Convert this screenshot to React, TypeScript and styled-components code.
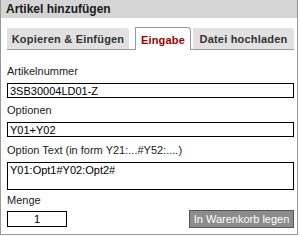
import React, { useEffect, useRef } from "react"
import styled, { createGlobalStyle } from "styled-components"

const GlobalStyle = createGlobalStyle`
	body {
		margin: 0;
		background: #fff;
		font-family: "Liberation Sans", Arial, sans-serif;
	}
	* {
		box-sizing: border-box;
	}
`

const Panel = styled.div`
	width: 298px;
	height: 235px;
	border: 1px solid #999;
	border-top: 0;
	display: flex;
	flex-direction: column;
`

const Header = styled.div`
	height: 18px;
	line-height: 19px;
	padding-left: 5px;
	background: #d5d5d5;
	color: #1a1a1a;
	font-size: 12px;
	font-weight: bold;
`

const TabBar = styled.div`
	display: flex;
	align-items: flex-end;
	height: 23px;
	margin: 9px 3px 0 6px;
	border-bottom: 1px solid #999;
`

const Tab = styled.div<{ $active?: boolean; $w: number; $ml?: number }>`
	width: ${(p) => p.$w}px;
	margin-left: ${(p) => p.$ml ?? 0}px;
	height: ${(p) => (p.$active ? 23 : 21)}px;
	margin-bottom: ${(p) => (p.$active ? -1 : 0)}px;
	display: flex;
	align-items: center;
	justify-content: center;
	font-size: 11px;
	font-weight: bold;
	letter-spacing: 0.2px;
	color: ${(p) => (p.$active ? "#990000" : "#333")};
	background: ${(p) => (p.$active ? "#fff" : "#e1e1e1")};
	border: ${(p) => (p.$active ? "1px solid #999" : "0")};
	border-bottom: 0;
	border-radius: ${(p) => (p.$active ? "0 4px 0 0" : "0 3px 0 0")};
	padding-top: ${(p) => (p.$active ? 1 : 0)}px;
	cursor: pointer;
`

const Content = styled.div`
	padding: 9px 3px 0 6px;
`

const Field = styled.div<{ $top?: number }>`
	margin-top: ${(p) => p.$top ?? 5}px;
`

const Label = styled.div<{ $mb?: number }>`
	height: 14px;
	line-height: 14px;
	margin-bottom: ${(p) => p.$mb ?? 5}px;
	font-size: 11px;
	color: #222;
`

const TextInput = styled.input<{ $w?: number; $center?: boolean }>`
	display: block;
	width: ${(p) => (p.$w ? `${p.$w}px` : "100%")};
	height: ${(p) => (p.$w ? 16 : 15)}px;
	margin: 0;
	padding: 0 2px;
	border: 1px solid #000;
	border-radius: 0;
	font-family: "Liberation Sans", Arial, sans-serif;
	font-size: 11px;
	color: #000;
	text-align: ${(p) => (p.$center ? "center" : "left")};
	outline: none;
`

const TextArea = styled.textarea`
	display: block;
	width: 100%;
	height: 28px;
	margin: 0;
	padding: 1px 2px 0;
	border: 1px solid #000;
	border-radius: 0;
	resize: none;
	overflow: hidden;
	font-family: "Liberation Sans", Arial, sans-serif;
	font-size: 11px;
	line-height: 13px;
	color: #000;
	caret-color: #000;
	outline: none;
`

const BottomRow = styled.div`
	display: flex;
	align-items: center;
	justify-content: space-between;
	height: 18px;
`

const CartButton = styled.button`
	width: 105px;
	height: 18px;
	margin: 0;
	padding: 0;
	border: 1px solid #555;
	border-radius: 0;
	background: #8c8c8c;
	color: #fff;
	font-family: "Liberation Sans", Arial, sans-serif;
	font-size: 11px;
	cursor: pointer;
`

export default function App() {
	const textRef = useRef<HTMLTextAreaElement>(null)

	useEffect(() => {
		// caret sits at the end of the option text
		const el = textRef.current
		if (el) {
			el.focus()
			el.setSelectionRange(el.value.length, el.value.length)
		}
	}, [])

	return (
		<>
			<GlobalStyle />
			<Panel>
				<Header>Artikel hinzufügen</Header>
				<TabBar>
					<Tab $w={122}>Kopieren &amp; Einfügen</Tab>
					<Tab $w={56} $ml={6} $active>
						Eingabe
					</Tab>
					<Tab $w={101} $ml={2}>
						Datei hochladen
					</Tab>
				</TabBar>
				<Content>
					<Field>
						<Label>Artikelnummer</Label>
						<TextInput defaultValue="3SB30004LD01-Z" />
					</Field>
					<Field>
						<Label>Optionen</Label>
						<TextInput defaultValue="Y01+Y02" />
					</Field>
					<Field $top={6}>
						<Label>Option Text (in form Y21:...#Y52:....)</Label>
						<TextArea ref={textRef} defaultValue="Y01:Opt1#Y02:Opt2#" />
					</Field>
					<Field $top={3}>
						<Label $mb={3}>Menge</Label>
						<BottomRow>
							<TextInput $w={60} $center defaultValue="1" />
							<CartButton>In Warenkorb legen</CartButton>
						</BottomRow>
					</Field>
				</Content>
			</Panel>
		</>
	)
}
